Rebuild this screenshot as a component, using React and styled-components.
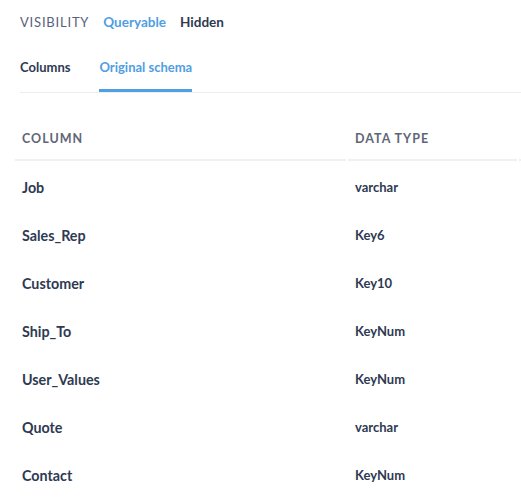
import React from "react";
import styled, { createGlobalStyle } from "styled-components";

const GlobalStyle = createGlobalStyle`
  body {
    margin: 0;
    background: #ffffff;
    font-family: Lato, "Open Sans", sans-serif;
    color: #2e3a52;
  }
`;

const Page = styled.div`
  padding: 0 0 0 20px;
  width: 501px;
  overflow: hidden;
`;

const VisibilityBar = styled.div`
  display: flex;
  align-items: center;
  height: 44px;
  gap: 14px;
  font-size: 13.5px;
`;

const VisibilityLabel = styled.span`
  font-size: 13px;
  color: #58607a;
  letter-spacing: 0.8px;
`;

const VisibilityOption = styled.span`
  font-weight: 700;
  color: ${(p) => (p.$active ? "#509ee3" : "#2e3a52")};
  cursor: pointer;
`;

const Tabs = styled.div`
  display: flex;
  gap: 29px;
  border-bottom: 1px solid #eeeeee;
`;

const Tab = styled.div`
  font-size: 13px;
  font-weight: 700;
  padding: 15px 0 14px;
  color: ${(p) => (p.$active ? "#509ee3" : "#2e3a52")};
  border-bottom: 3px solid ${(p) => (p.$active ? "#509ee3" : "transparent")};
  cursor: pointer;
`;

const Table = styled.table`
  margin-top: 34px;
  margin-left: -7px;
  border-collapse: separate;
  border-spacing: 2px 0;
  width: 600px;
  table-layout: fixed;
`;

const HeadCell = styled.th`
  text-align: left;
  font-size: 12.5px;
  font-weight: 700;
  letter-spacing: 1px;
  color: #5f6577;
  padding: 4px 7px 0;
  height: 28px;
  vertical-align: top;
  border-bottom: 2px solid #f0f0f0;
  width: ${(p) => p.$w}px;
`;

const Cell = styled.td`
  padding: ${(p) => (p.$first ? "2px" : "0")} 7px 0;
  height: 48px;
  font-weight: 700;
  font-size: ${(p) => (p.$small ? "13px" : "14.3px")};
  color: #2e3a52;
`;

const rows = [
  ["Job", "varchar"],
  ["Sales_Rep", "Key6"],
  ["Customer", "Key10"],
  ["Ship_To", "KeyNum"],
  ["User_Values", "KeyNum"],
  ["Quote", "varchar"],
  ["Contact", "KeyNum"],
];

export default function App() {
  return (
    <>
      <GlobalStyle />
      <Page>
        <VisibilityBar>
          <VisibilityLabel>VISIBILITY</VisibilityLabel>
          <VisibilityOption $active>Queryable</VisibilityOption>
          <VisibilityOption>Hidden</VisibilityOption>
        </VisibilityBar>
        <Tabs>
          <Tab>Columns</Tab>
          <Tab $active>Original schema</Tab>
        </Tabs>
        <Table>
          <thead>
            <tr>
              <HeadCell $w={317}>COLUMN</HeadCell>
              <HeadCell $w={155}>DATA TYPE</HeadCell>
              <HeadCell $w={100}></HeadCell>
            </tr>
          </thead>
          <tbody>
            {rows.map(([name, type], i) => (
              <tr key={name}>
                <Cell $first={i === 0}>{name}</Cell>
                <Cell $first={i === 0} $small>{type}</Cell>
                <Cell $first={i === 0} />
              </tr>
            ))}
          </tbody>
        </Table>
      </Page>
    </>
  );
}
